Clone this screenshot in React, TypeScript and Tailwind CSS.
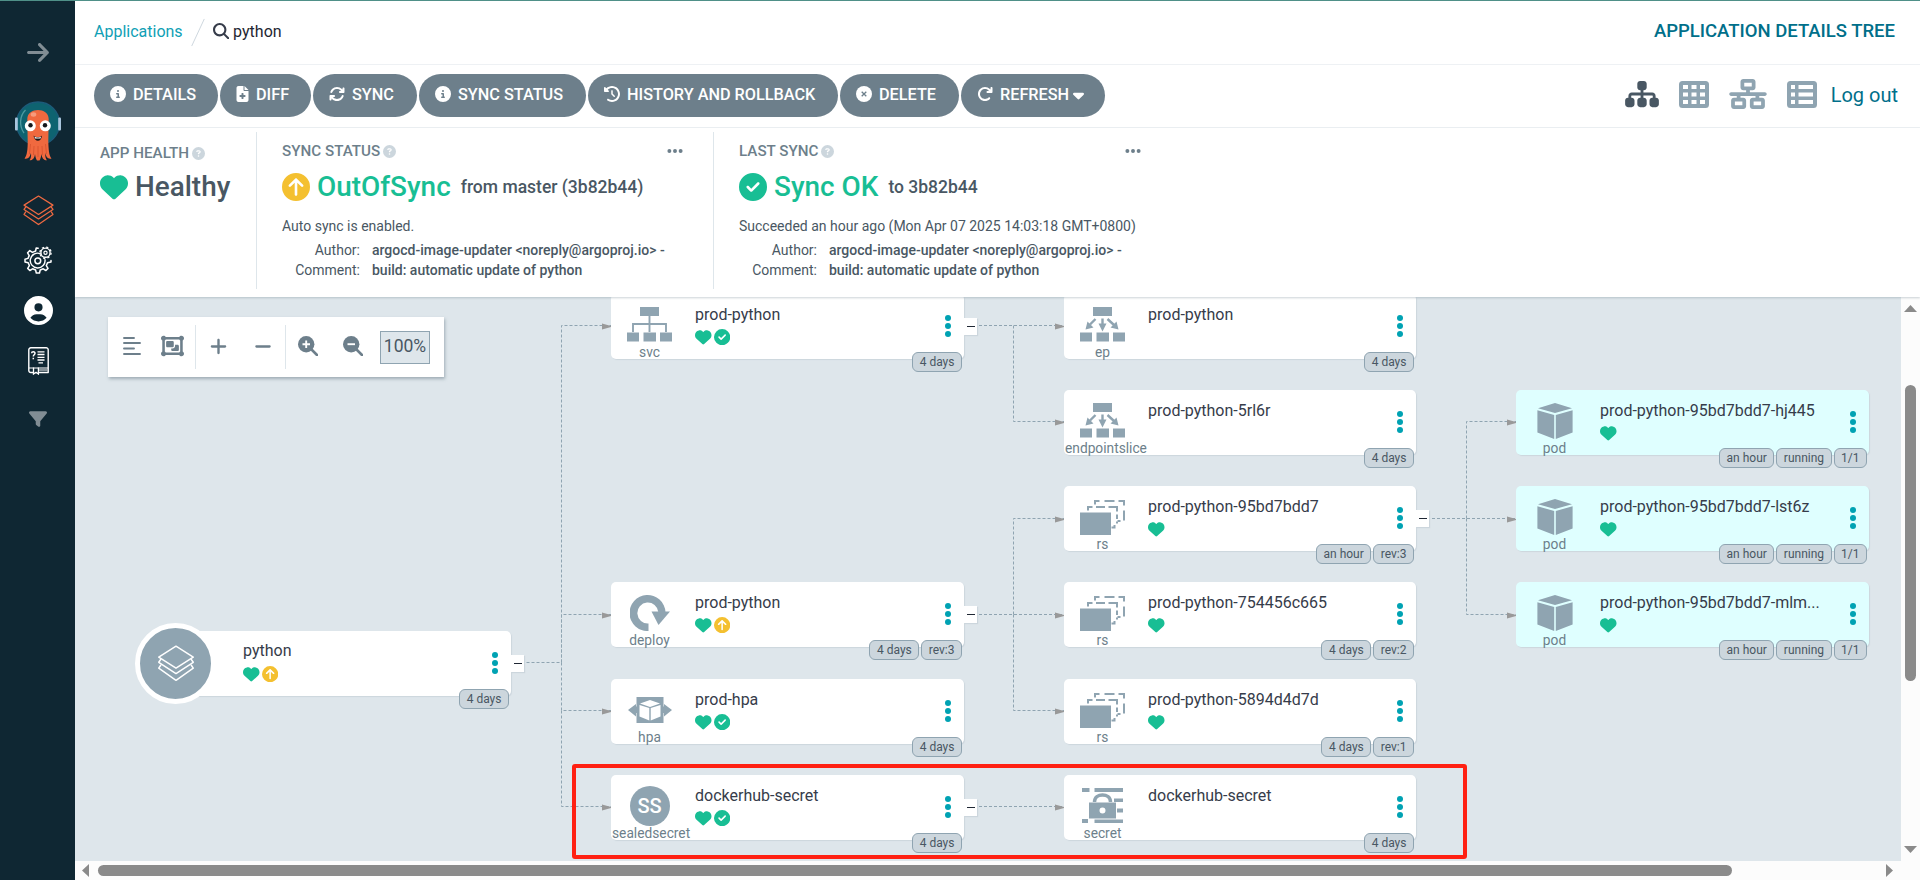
import React from "react";
import {
  FaArrowRight,
  FaArrowsRotate,
  FaCaretDown,
  FaCircleArrowUp,
  FaCircleCheck,
  FaCircleInfo,
  FaCircleQuestion,
  FaCircleUser,
  FaClockRotateLeft,
  FaEllipsis,
  FaFileMedical,
  FaFilter,
  FaHeart,
  FaMagnifyingGlass,
  FaMinus,
  FaNetworkWired,
  FaObjectGroup,
  FaPlus,
  FaArrowRotateRight,
  FaSitemap,
} from "react-icons/fa6";

type Kind = "svc" | "ep" | "endpointslice" | "rs" | "pod" | "deploy" | "hpa" | "sealedsecret" | "secret";
type Sync = "synced" | "outofsync";

interface ResourceNode {
  kind: Kind;
  name: string;
  place: string;
  healthy?: boolean;
  sync?: Sync;
  badges: string[];
  collapsible?: boolean;
}

const nodes: ResourceNode[] = [
  { kind: "svc", name: "prod-python", place: "left-[536px] top-[-3px] w-[353px]", healthy: true, sync: "synced", badges: ["4 days"], collapsible: true },
  { kind: "deploy", name: "prod-python", place: "left-[536px] top-[285px] w-[353px]", healthy: true, sync: "outofsync", badges: ["4 days", "rev:3"], collapsible: true },
  { kind: "hpa", name: "prod-hpa", place: "left-[536px] top-[382px] w-[353px]", healthy: true, sync: "synced", badges: ["4 days"] },
  { kind: "sealedsecret", name: "dockerhub-secret", place: "left-[536px] top-[478px] w-[353px]", healthy: true, sync: "synced", badges: ["4 days"], collapsible: true },
  { kind: "ep", name: "prod-python", place: "left-[989px] top-[-3px] w-[352px]", badges: ["4 days"] },
  { kind: "endpointslice", name: "prod-python-5rl6r", place: "left-[989px] top-[93px] w-[352px]", badges: ["4 days"] },
  { kind: "rs", name: "prod-python-95bd7bdd7", place: "left-[989px] top-[189px] w-[352px]", healthy: true, badges: ["an hour", "rev:3"], collapsible: true },
  { kind: "rs", name: "prod-python-754456c665", place: "left-[989px] top-[285px] w-[352px]", healthy: true, badges: ["4 days", "rev:2"] },
  { kind: "rs", name: "prod-python-5894d4d7d", place: "left-[989px] top-[382px] w-[352px]", healthy: true, badges: ["4 days", "rev:1"] },
  { kind: "secret", name: "dockerhub-secret", place: "left-[989px] top-[478px] w-[352px]", badges: ["4 days"] },
  { kind: "pod", name: "prod-python-95bd7bdd7-hj445", place: "left-[1441px] top-[93px] w-[353px]", healthy: true, badges: ["an hour", "running", "1/1"] },
  { kind: "pod", name: "prod-python-95bd7bdd7-lst6z", place: "left-[1441px] top-[189px] w-[353px]", healthy: true, badges: ["an hour", "running", "1/1"] },
  { kind: "pod", name: "prod-python-95bd7bdd7-mlm...", place: "left-[1441px] top-[285px] w-[353px]", healthy: true, badges: ["an hour", "running", "1/1"] },
];

const edges = [
  "M446.5 365.5H486.5V28.5H536",
  "M486.5 365.5V317.5H536",
  "M486.5 365.5V413.5H536",
  "M486.5 413.5V509.5H536",
  "M904 28.5H989",
  "M938.5 28.5V124.5H989",
  "M904 317.5H989",
  "M938.5 317.5V221.5H989",
  "M938.5 317.5V413.5H989",
  "M904 509.5H989",
  "M1357 221.5H1441",
  "M1391.5 221.5V124.5H1441",
  "M1391.5 221.5V317.5H1441",
];

const arrowTips: [number, number][] = [
  [536, 29.5], [536, 318.5], [536, 414.5], [536, 510.5],
  [989, 29.5], [989, 125.5], [989, 222.5], [989, 318.5], [989, 414.5], [989, 510.5],
  [1441, 125.5], [1441, 222.5], [1441, 318.5],
];

function LayersIcon({ className }: { className: string }) {
  return (
    <svg viewBox="0 0 30 30" className={className} fill="none" stroke="currentColor" strokeWidth="1.2" strokeLinejoin="round" strokeLinecap="round">
      <path d="M15 1 29 9.8 15 18.8 1 9.8Z" />
      <path d="M2.6 11.8 1 14 15 23.2 29 14 27.4 11.8" />
      <path d="M2.6 16.4 1 18.8 15 28.6 29 18.8 27.4 16.4" />
    </svg>
  );
}

function GearsIcon() {
  return (
    <svg viewBox="0 0 28 28" className="h-7 w-7 text-white" fill="none" stroke="currentColor">
      <path
        strokeWidth="1.5"
        strokeLinejoin="round"
        strokeLinecap="round"
        d="M14.2 2.2 12.2 2 11.6 5 8.4 6.4 5.8 4.6 3.6 6.8 5.2 9.6 4 12.4 1 13.2V16L4.2 16.8 5.4 19.6 3.7 22.4 5.8 24.5 8.6 22.8 11.6 24 12.3 27H15.5L16.2 24 19.2 22.8 21.9 24.5 24 22.4 22.3 19.6 23.5 16.8 27 16V14.5"
      />
      <path strokeWidth="1.4" strokeLinecap="round" d="M16.2 7.6A7.4 7.4 0 1 0 21 13.6" />
      <circle cx="13.8" cy="14.8" r="2.9" strokeWidth="1.5" />
      <circle cx="21.5" cy="6.7" r="4.6" strokeWidth="1.4" />
      <circle cx="21.5" cy="6.7" r="1.6" strokeWidth="1.2" />
      <circle cx="21.5" cy="6.7" r="5.6" strokeWidth="1.3" strokeDasharray="2.2 2.2" />
    </svg>
  );
}

function DocsIcon() {
  return (
    <svg viewBox="0 0 21 28" className="h-7 w-[21px] text-white" fill="none" stroke="currentColor" strokeWidth="1.4">
      <path strokeLinejoin="round" d="M5 25.5H2.8A2 2 0 0 1 .8 23.5V2.8A2 2 0 0 1 2.8 .8H18.2A2 2 0 0 1 20.2 2.8V25.5H11" />
      <path strokeWidth="1" d="M1 21H20M11 23H19.5" />
      <path strokeWidth="1.3" d="M5.5 20.5V27L8 25.2 10.4 27V20.5" />
      <path strokeWidth="1.5" d="M3.6 6.3C3.6 4.2 7 4.2 7 6.3 7 7.8 5.3 7.8 5.3 9.5M5.3 10.8V12.3" />
      <path strokeWidth="1.3" d="M9.5 4.8H16.5M9.5 7.5H16.5M9.5 10.3H16.5M9.5 13H16.5M10.5 15.8H15" />
    </svg>
  );
}

function ArgoLogo() {
  return (
    <svg viewBox="0 0 46 60" className="h-[60px] w-[46px]">
      <circle cx="23" cy="22.5" r="21.5" fill="#0e6370" stroke="#1c5a79" strokeWidth="1.3" />
      <path d="M10.5 9C4.5 15 4 25 9 32" fill="none" stroke="#4f9aa2" strokeWidth="1.3" />
      <rect x="0" y="16.5" width="2.8" height="13" rx="1" fill="#a9c5dd" />
      <rect x="43.2" y="16.5" width="2.8" height="13" rx="1" fill="#a9c5dd" />
      <path
        d="M12.3 18C12.3 6 33.7 6 33.7 18L33.3 40C33.5 48 34 55 36.5 57.5 33 58.5 31 56 30.2 52 30 56 31 58 32 59.3 28.5 59.3 27 57 26.5 53 26 56 25.5 58 24.5 59.5H22C21 58 20.3 56 20 53 19.5 57 18 59.3 14.5 59.3 16 57.5 16.3 55 16 52 15 56 13 58.5 9.5 57.5 12 55 12.8 48 12.7 40Z"
        fill="#f0693f"
      />
      <path d="M15.5 43 14.5 53M19 45 18.5 54M23 45V56M27 45 27.5 54M30.5 43 31.5 53" stroke="#d6522e" strokeWidth=".8" />
      <ellipse cx="18.5" cy="13.5" rx="2.8" ry="2.2" fill="#f79b7c" />
      <circle cx="15.3" cy="24.8" r="5.5" fill="#fff" />
      <circle cx="30.3" cy="24.8" r="5.5" fill="#fff" />
      <circle cx="15.5" cy="24.3" r="2.2" fill="#14181c" />
      <circle cx="30" cy="24.3" r="2.2" fill="#14181c" />
      <path d="M18.5 34.5C20 36.5 25.5 36.5 27 34.5 26.5 41.5 19.5 41.5 18.5 34.5Z" fill="#1b1718" />
      <path d="M19.5 35.7C21 36.8 25 36.8 26 35.7L25.5 37.5H20Z" fill="#fff" />
    </svg>
  );
}

function Sidebar() {
  return (
    <aside className="flex w-[75px] shrink-0 flex-col items-center bg-[#0f2733] pl-px text-white">
      <FaArrowRight className="mt-[39px] h-[25px] w-[24px] text-[#818d94]" />
      <div className="mt-[36px]">
        <ArgoLogo />
      </div>
      <LayersIcon className="mt-[34px] h-[31px] w-[31px] text-[#ef6a42]" />
      <div className="mt-[20px]">
        <GearsIcon />
      </div>
      <FaCircleUser className="mt-[22px] h-[29px] w-[29px]" />
      <div className="mt-[22px]">
        <DocsIcon />
      </div>
      <FaFilter className="mt-[35px] h-[18px] w-[18px] text-[#818d94]" />
    </aside>
  );
}

function Header() {
  return (
    <header className="flex h-[64px] items-center border-b border-[#eef1f4] pr-[25px] pl-[19px]">
      <span className="pb-px text-[16px] leading-5 text-[#0fa0b5]">Applications</span>
      <svg viewBox="0 0 14 30" className="mr-[8px] ml-[8px] h-[30px] w-[14px] pb-px">
        <path d="M13.5 1 .5 29" stroke="#ccd6dd" strokeWidth="1" />
      </svg>
      <FaMagnifyingGlass className="mb-[3px] h-[16.500px] w-[16.500px] text-[#363c4a]" />
      <span className="ml-1 pb-px text-[16px] leading-5 text-[#1f2733]">python</span>
      <h1 className="ml-auto pb-[3px] text-[18.500px] leading-5 font-medium text-[#006f8a]">APPLICATION DETAILS TREE</h1>
    </header>
  );
}

function CircleCrossIcon() {
  return (
    <svg viewBox="0 0 16 16" className="h-4 w-4 shrink-0">
      <circle cx="8" cy="8" r="8" fill="currentColor" />
      <path d="M5.700 5.700 10.300 10.300M10.300 5.700 5.700 10.300" stroke="#6d7f8b" strokeWidth="1.300" />
    </svg>
  );
}

function ActionButton({ icon, label, width, caret }: { icon: React.ReactNode; label: string; width: string; caret?: boolean }) {
  return (
    <button className={`flex h-[43px] shrink-0 items-center rounded-full bg-[#6d7f8b] pb-[2px] pl-4 text-[16.250px] leading-5 font-medium whitespace-nowrap text-white ${width}`}>
      <span className="mb-[2px] shrink-0">{icon}</span>
      <span className="ml-[7px]">{label}</span>
      {caret && <FaCaretDown className="ml-[4px] h-[18px] w-[11px]" />}
    </button>
  );
}

function Toolbar() {
  return (
    <div className="flex h-[63px] items-start border-b border-[#eef1f4] pt-[9px] pl-[19px]">
      <div className="flex gap-[2px]">
        <ActionButton icon={<FaCircleInfo className="h-4 w-4" />} label="DETAILS" width="w-[124px]" />
        <ActionButton icon={<FaFileMedical className="h-4 w-[13px]" />} label="DIFF" width="w-[91px]" />
        <ActionButton icon={<FaArrowsRotate className="h-4 w-4" />} label="SYNC" width="w-[104px]" />
        <ActionButton icon={<FaCircleInfo className="h-4 w-4" />} label="SYNC STATUS" width="w-[167px]" />
        <ActionButton icon={<FaClockRotateLeft className="h-4 w-4" />} label="HISTORY AND ROLLBACK" width="w-[250px]" />
        <ActionButton icon={<CircleCrossIcon />} label="DELETE" width="w-[119px]" />
        <ActionButton icon={<FaArrowRotateRight className="h-4 w-4" />} label="REFRESH" width="w-[144px]" caret />
      </div>
      <div className="mr-[22px] ml-auto flex h-[40px] items-center text-[#8fa4b1]">
        <FaSitemap className="h-[30px] w-[34px] text-[#495763]" />
        <svg viewBox="0 0 30 27" className="ml-5 h-[27px] w-[30px]" fill="currentColor">
          <path fillRule="evenodd" d="M3.500 0H26.500A3.500 3.500 0 0 1 30 3.500V23.500A3.500 3.500 0 0 1 26.500 27H3.500A3.500 3.500 0 0 1 0 23.500V3.500A3.500 3.500 0 0 1 3.500 0ZM4 4V8H9V4ZM12.500 4V8H17.500V4ZM21 4V8H26V4ZM4 11.500V15.500H9V11.500ZM12.500 11.500V15.500H17.500V11.500ZM21 11.500V15.500H26V11.500ZM4 19V23H9V19ZM12.500 19V23H17.500V19ZM21 19V23H26V19Z" />
        </svg>
        <FaNetworkWired className="ml-5 h-[30px] w-[38px]" />
        <svg viewBox="0 0 30 27" className="ml-5 h-[27px] w-[30px]" fill="currentColor">
          <path fillRule="evenodd" d="M3.500 0H26.500A3.500 3.500 0 0 1 30 3.500V23.500A3.500 3.500 0 0 1 26.500 27H3.500A3.500 3.500 0 0 1 0 23.500V3.500A3.500 3.500 0 0 1 3.500 0ZM4 4V8H8V4ZM11.500 4V8H26V4ZM4 11.500V15.500H8V11.500ZM11.500 11.500V15.500H26V11.500ZM4 19V23H8V19ZM11.500 19V23H26V19Z" />
        </svg>
        <span className="ml-[14px] pt-[2px] text-[20px] leading-6 text-[#006f8a]">Log out</span>
      </div>
    </div>
  );
}

function PanelTitle({ text, more }: { text: string; more?: boolean }) {
  return (
    <div className="flex h-5 items-center text-[15.200px] leading-5 font-medium text-[#6d7f8b]">
      {text}
      <FaCircleQuestion className="ml-[3px] h-[13px] w-[13px] text-[#ccd6dd]" />
      {more && <FaEllipsis className="ml-auto h-[18px] w-[18px]" />}
    </div>
  );
}

function CommitInfo() {
  return (
    <dl className="mt-1 grid grid-cols-[78px_1fr] gap-x-3 text-[14px] leading-5 text-[#495763]">
      <dt className="text-right">Author:</dt>
      <dd className="font-medium">argocd-image-updater &lt;noreply@argoproj.io&gt; -</dd>
      <dt className="text-right">Comment:</dt>
      <dd className="font-medium">build: automatic update of python</dd>
    </dl>
  );
}

function StatusPanel() {
  return (
    <section className="relative z-10 flex h-[169px] bg-white pt-1 pb-2 shadow-[0_1px_2px_rgba(109,127,139,0.350)]">
      <div className="w-[182px] border-r border-[#dee6eb] pt-[11px] pl-[25px]">
        <PanelTitle text="APP HEALTH" />
        <div className="mt-[9px] flex h-[30px] items-center text-[27.900px] leading-[30px] font-medium text-[#495763]">
          <FaHeart className="h-7 w-7 text-[#18be94]" />
          <span className="ml-[7px]">Healthy</span>
        </div>
      </div>
      <div className="w-[457px] border-r border-[#dee6eb] pt-[9px] pr-[29px] pl-[25px]">
        <PanelTitle text="SYNC STATUS" more />
        <div className="mt-[11px] flex h-[30px] items-center text-[17.500px] leading-[30px] font-medium whitespace-nowrap text-[#495763]">
          <FaCircleArrowUp className="h-7 w-7 text-[#f4c030]" />
          <span className="ml-[7px] text-[27.900px] text-[#18be94]">OutOfSync</span>
          <span className="ml-[10px]">from master (3b82b44)</span>
        </div>
        <p className="mt-[14px] text-[14px] leading-5 text-[#495763]">Auto sync is enabled.</p>
        <CommitInfo />
      </div>
      <div className="w-[457px] pt-[9px] pr-[29px] pl-[25px]">
        <PanelTitle text="LAST SYNC" more />
        <div className="mt-[11px] flex h-[30px] items-center text-[17.500px] leading-[30px] font-medium whitespace-nowrap text-[#495763]">
          <FaCircleCheck className="h-7 w-7 text-[#18be94]" />
          <span className="ml-[7px] text-[27.900px] text-[#18be94]">Sync OK</span>
          <span className="ml-[10px]">to 3b82b44</span>
        </div>
        <p className="mt-[14px] text-[14px] leading-5 whitespace-nowrap text-[#495763]">
          Succeeded an hour ago (Mon Apr 07 2025 14:03:18 GMT+0800)
        </p>
        <CommitInfo />
      </div>
    </section>
  );
}

function ZoomIcon({ plus }: { plus?: boolean }) {
  return (
    <svg viewBox="0 0 20 20" className="h-5 w-5">
      <path d="M12.500 12.500 19 19" stroke="currentColor" strokeWidth="2.600" strokeLinecap="round" />
      <circle cx="8.200" cy="8.200" r="8.200" fill="currentColor" />
      <path d={plus ? "M4.500 8.200H12M8.200 4.500V12" : "M4.500 8.200H12"} stroke="#fff" strokeWidth="1.900" />
    </svg>
  );
}

function GraphControls() {
  return (
    <div className="absolute top-[20px] left-[33px] flex h-[60px] w-[336px] items-center bg-white text-[#6d7f8b] shadow-[1px_2px_3px_rgba(109,127,139,0.550)]">
      <svg viewBox="0 0 18 18" className="mb-[2px] ml-[15px] h-[18px] w-[18px] shrink-0" stroke="currentColor" strokeWidth="1.900" strokeLinecap="round">
        <path d="M1 1H11M1 6H17M1 11.500H11M1 17H17" />
      </svg>
      <FaObjectGroup className="mb-[2px] ml-[20px] h-[22px] w-[23px] shrink-0" />
      <span className="ml-[11px] h-[44px] w-px shrink-0 bg-[#dee6eb]" />
      <FaPlus className="mb-[2px] ml-[13px] h-[19px] w-[19px] shrink-0" />
      <FaMinus className="mb-[2px] ml-[26px] h-[19px] w-[18px] shrink-0" />
      <span className="ml-[13px] h-[44px] w-px shrink-0 bg-[#dee6eb]" />
      <span className="mb-[2px] ml-[12px] shrink-0"><ZoomIcon plus /></span>
      <span className="mb-[2px] ml-[25px] shrink-0"><ZoomIcon /></span>
      <span className="mt-px ml-[17px] flex h-[33px] w-[50px] shrink-0 items-center justify-center border border-[#8fa4b1] bg-[#dee6eb] pb-[3px] text-[17.500px] leading-5 text-[#495763]">
        100%
      </span>
    </div>
  );
}

function FanBoxes() {
  return (
    <>
      <rect x="13" y="0" width="19" height="9" />
      <rect x="0" y="25.500" width="12" height="9" />
      <rect x="16.500" y="25.500" width="12.500" height="9" />
      <rect x="33" y="25.500" width="12" height="9" />
    </>
  );
}

function KindIcon({ kind }: { kind: Kind }) {
  switch (kind) {
    case "svc":
      return (
        <svg viewBox="0 0 45 35" className="h-[35px] w-[45px]" fill="currentColor">
          <FanBoxes />
          <path d="M22.500 9V25M6 25V17H39V25" fill="none" stroke="currentColor" strokeWidth="1.900" />
        </svg>
      );
    case "ep":
    case "endpointslice":
      return (
        <svg viewBox="0 0 45 35" className="h-[35px] w-[45px]" fill="currentColor">
          <FanBoxes />
          <path d="M15.500 12 10 17.500M22.500 11.500V18M27.500 12 34 18" fill="none" stroke="currentColor" strokeWidth="2.400" />
          <path d="M5.500 22.500 7.500 14.500 13.500 20.500ZM18.500 16.500H26.500L22.500 24.500ZM38.500 22.500 36.500 14.500 30.500 20.500Z" />
        </svg>
      );
    case "rs":
      return (
        <svg viewBox="0 0 45 35" className="mt-px h-[35px] w-[45px]" fill="none" stroke="currentColor" strokeWidth="2">
          <rect x="0" y="12.500" width="31" height="22.500" fill="currentColor" stroke="none" />
          <path d="M8 10.500V7H12.500M16 7H25M28.500 7H37V11.500M37 14.500V19M37 21.500V23.500M31.500 27.500H34.500V25M40.500 21H37.500" />
          <path d="M15 4.500V1H19.500M24.500 1H34.500M38.500 1H44V5.500M44 10.500V20.500" />
        </svg>
      );
    case "pod":
      return (
        <svg viewBox="0 0 36 36" className="h-[36px] w-[36px]" fill="currentColor">
          <path d="M18 0 35 5.200 18 10 1 5.200ZM.4 7.200 17.200 12V36L.4 29.500ZM35.600 7.200 18.800 12V36L35.600 29.500Z" />
        </svg>
      );
    case "deploy":
      return (
        <svg viewBox="0 0 40 36" className="mt-px h-[36px] w-[40px]" fill="currentColor">
          <path d="M18.500 36V28.500A10.500 10.500 0 1 1 28.300 17H35.500A18 18 0 1 0 18.500 36Z" />
          <path d="M21.500 16.500H40L28.500 30Z" />
        </svg>
      );
    case "hpa":
      return (
        <svg viewBox="0 0 44 26" className="h-[26px] w-[44px]" fill="currentColor">
          <path d="M8.500 0H35.500V9.500H36V7L44 13 36 19.500V16H35.500V26H8.500V16H8V19.500L0 13 8 7V9.500H8.500Z" />
          <path d="M22 3 32 6.500 22 10 12 6.500ZM11.500 8 21.300 11V23.500L11.500 19.500ZM32.500 8 22.700 11V23.500L32.500 19.500Z" fill="#fff" />
        </svg>
      );
    case "sealedsecret":
      return (
        <span className="flex h-10 w-10 items-center justify-center rounded-full bg-[#8fa4b1] text-[20px] leading-6 font-medium text-white">SS</span>
      );
    case "secret":
      return (
        <svg viewBox="0 0 41 35" className="h-[35px] w-[41px]" fill="currentColor">
          <path d="M0 0H7.500V4H0ZM12.500 0H41V4H12.500ZM0 31H6V35H0ZM12.500 31.500H41V35H12.500ZM32 10.500H41V14H32ZM35 20.500H41V24.500H35Z" />
          <path d="M12.500 14C12.500 4.500 28.500 4.500 28.500 14" fill="none" stroke="currentColor" strokeWidth="3.500" />
          <path fillRule="evenodd" d="M7 14.500H34V30.500H7ZM20.500 19.500A3 3 0 1 0 20.500 25.500 3 3 0 0 0 20.500 19.500Z" />
        </svg>
      );
  }
}

function StateIcons({ healthy, sync }: { healthy?: boolean; sync?: Sync }) {
  return (
    <div className="flex h-4 items-center gap-[2px]">
      {healthy && <FaHeart className="h-[16.500px] w-[16.500px] text-[#18be94]" />}
      {sync === "synced" && <FaCircleCheck className="h-[16.250px] w-[16.250px] text-[#18be94]" />}
      {sync === "outofsync" && <FaCircleArrowUp className="h-[16.250px] w-[16.250px] text-[#f4c030]" />}
    </div>
  );
}

function KebabDots() {
  return (
    <svg viewBox="0 0 6 22" className="mr-[13.500px] mb-px ml-auto h-[22px] w-[6px] shrink-0" fill="#00a2b3">
      <circle cx="3" cy="3" r="3" />
      <circle cx="3" cy="11" r="3" />
      <circle cx="3" cy="19" r="3" />
    </svg>
  );
}

function Badges({ items }: { items: string[] }) {
  return (
    <div className="absolute right-[2px] -bottom-[13px] flex gap-[2px]">
      {items.map((b) => (
        <span key={b} className="flex h-5 items-center rounded-[6px] border border-[#8fa4b1] bg-[#ccd6dd] px-[6.500px] text-[12px] leading-4 whitespace-nowrap text-[#495763]">
          {b}
        </span>
      ))}
    </div>
  );
}

function CollapseToggle() {
  return (
    <span className="absolute top-[24px] -right-[13px] flex h-[17px] w-[13px] items-center justify-center bg-white shadow-[1px_1px_1px_#ccd6dd]">
      <span className="h-px w-2 bg-[#1f2733]" />
    </span>
  );
}

function NodeCard({ node }: { node: ResourceNode }) {
  const bg = node.kind === "pod" ? "bg-[#dfffff]" : "bg-white";
  return (
    <article className={`absolute flex h-[65px] items-center rounded-[5px] shadow-[1px_1px_1px_#ccd6dd] ${bg} ${node.place}`}>
      <div className="flex h-[65px] w-[84px] shrink-0 flex-col items-start">
        <div className="flex h-[61px] w-[77px] shrink-0 items-center justify-center text-[#8fa4b1]">
          <KindIcon kind={node.kind} />
        </div>
        <span className="-mt-[10px] ml-px min-w-[75px] text-center text-[13.750px] leading-[14px] text-[#6d7f8b]">{node.kind}</span>
      </div>
      <div className="flex h-[65px] flex-col pt-[11px]">
        <span className="text-[16px] leading-5 whitespace-nowrap text-[#363c4a]">{node.name}</span>
        <div className="mt-1">
          <StateIcons healthy={node.healthy} sync={node.sync} />
        </div>
      </div>
      <KebabDots />
      <Badges items={node.badges} />
      {node.collapsible && <CollapseToggle />}
    </article>
  );
}

function RootNode() {
  return (
    <article className="absolute top-[334px] left-[100px] flex h-[65px] w-[336px] items-center rounded-[5px] bg-white shadow-[1px_1px_1px_#ccd6dd]">
      <div className="-ml-[40px] flex h-[81px] w-[81px] shrink-0 items-center justify-center rounded-full border-[5px] border-white bg-[#8fa4b1] text-white">
        <LayersIcon className="h-[37px] w-[38px]" />
      </div>
      <div className="ml-[27px] flex h-[65px] flex-col pt-[10px]">
        <span className="text-[16px] leading-5 text-[#363c4a]">python</span>
        <div className="mt-[5px]">
          <StateIcons healthy sync="outofsync" />
        </div>
      </div>
      <KebabDots />
      <Badges items={["4 days"]} />
      <CollapseToggle />
    </article>
  );
}

function Graph() {
  return (
    <div className="relative min-w-0 flex-1 overflow-hidden bg-[#dee6eb]">
      <svg viewBox="0 0 1826 564" className="absolute inset-0 h-[564px] w-[1826px]">
        {edges.map((d) => (
          <path key={d} d={d} fill="none" stroke="#8fa4b1" strokeWidth="1" strokeDasharray="3 2" />
        ))}
        {arrowTips.map(([x, y]) => (
          <path key={`${x}-${y}`} d={`M${x - 9} ${y - 3}L${x} ${y - 0.5}V${y + 0.5}L${x - 9} ${y + 3}Z`} fill="#999" />
        ))}
      </svg>
      <RootNode />
      {nodes.map((n) => (
        <NodeCard key={`${n.kind}-${n.name}`} node={n} />
      ))}
      <GraphControls />
      <div className="absolute top-[467px] left-[497px] h-[95px] w-[895px] rounded-[3px] border-4 border-[#ff2012]" />
    </div>
  );
}

function VerticalScrollbar() {
  return (
    <div className="flex w-[19px] shrink-0 flex-col items-center bg-[#fcfcfc]">
      <svg viewBox="0 0 13 7" className="mt-[8px] h-[7px] w-[13px]" fill="#8a8a8a"><path d="M6.500 0 13 7H0Z" /></svg>
      <div className="mt-[73px] h-[296px] w-[11px] rounded-full bg-[#8a8a8a]" />
      <svg viewBox="0 0 13 7" className="mt-auto mb-[8px] h-[7px] w-[13px]" fill="#8a8a8a"><path d="M6.500 7 13 0H0Z" /></svg>
    </div>
  );
}

function HorizontalScrollbar() {
  return (
    <div className="flex h-[19px] shrink-0 items-center bg-[#fcfcfc] pr-[27px] pl-[7px]">
      <svg viewBox="0 0 7 13" className="h-[13px] w-[7px]" fill="#8a8a8a"><path d="M0 6.500 7 0V13Z" /></svg>
      <div className="ml-[9px] h-[11px] w-[1634px] rounded-full bg-[#8a8a8a]" />
      <svg viewBox="0 0 7 13" className="ml-auto h-[13px] w-[7px]" fill="#8a8a8a"><path d="M7 6.500 0 0V13Z" /></svg>
    </div>
  );
}

export default function App() {
  return (
    <div className="flex h-[880px] w-[1920px] flex-col overflow-hidden border-t border-[#4f9088] bg-white font-['Roboto',sans-serif]">
      <div className="flex min-h-0 flex-1">
        <Sidebar />
        <main className="flex min-w-0 flex-1 flex-col">
          <Header />
          <Toolbar />
          <StatusPanel />
          <div className="flex h-[564px] shrink-0">
            <Graph />
            <VerticalScrollbar />
          </div>
          <HorizontalScrollbar />
        </main>
      </div>
    </div>
  );
}
